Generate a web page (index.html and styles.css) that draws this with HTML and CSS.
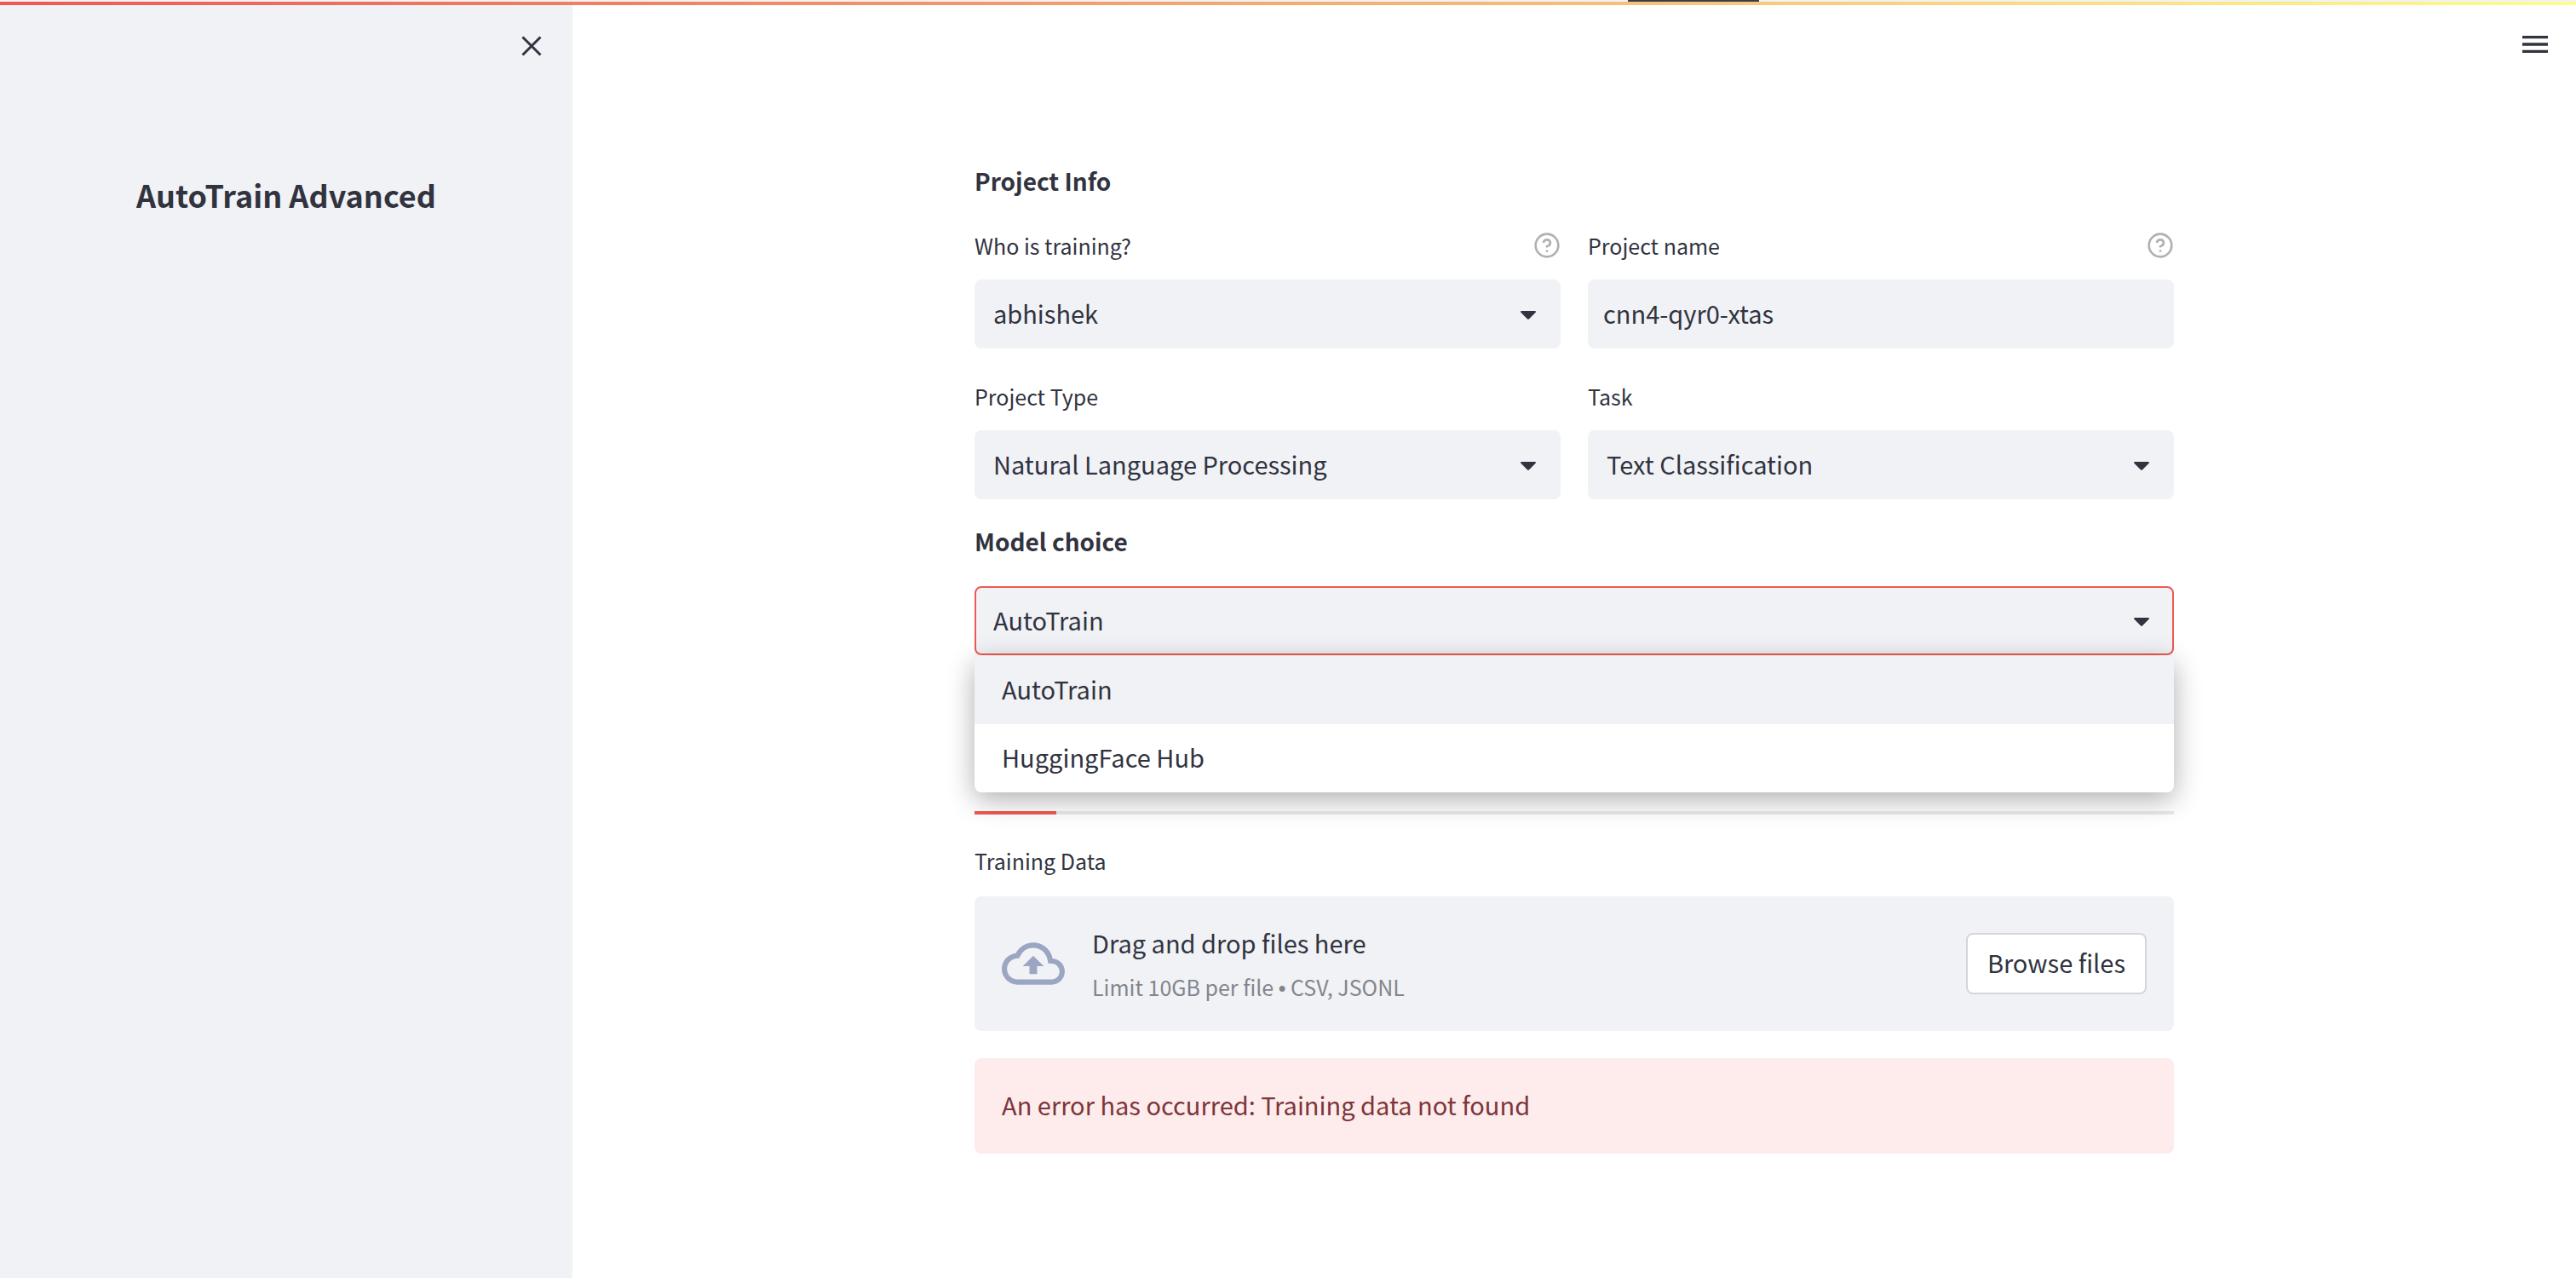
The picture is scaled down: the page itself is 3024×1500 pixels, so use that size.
FILE: index.html
```html
<!DOCTYPE html>
<html lang="en">
<head>
<meta charset="utf-8">
<meta name="viewport" content="width=device-width, initial-scale=1">
<title>AutoTrain Advanced</title>
<link rel="stylesheet" href="styles.css">
</head>
<body>
<div class="topstrip"><div class="topstrip-mark"></div></div>
<div class="decoration"></div>
<div class="app">
  <aside class="sidebar">
    <button class="icon-button sidebar-close" type="button" aria-label="Close sidebar">
      <svg width="24" height="24" viewBox="0 0 24 24" fill="none" stroke="currentColor" stroke-width="3"><path d="M1.5 1.5l21 21M22.5 1.5l-21 21"/></svg>
    </button>
    <h1 class="sidebar-title">AutoTrain Advanced</h1>
  </aside>

  <main class="main">
    <button class="icon-button menu-button" type="button" aria-label="Main menu">
      <svg width="30" height="20" viewBox="0 0 30 20" fill="currentColor"><path d="M0 0h30v3.3H0zM0 8.3h30v3.4H0zM0 16.7h30V20H0z"/></svg>
    </button>

    <form class="content">
      <h2 class="section-title">Project Info</h2>
      <div class="fields">
        <div class="field">
          <div class="label-row">
            <label for="who">Who is training?</label>
            <button class="icon-button" type="button" aria-label="Help for who is training">
              <svg width="32" height="32" viewBox="0 0 24 24" class="help" fill="none" stroke="currentColor" stroke-width="2" stroke-linecap="round" stroke-linejoin="round"><circle cx="12" cy="12" r="10"/><path d="M9.09 9a3 3 0 0 1 5.83 1c0 2-3 3-3 3M12 17h.01"/></svg>
            </button>
          </div>
          <div class="select">
            <select class="control" id="who"><option>abhishek</option></select>
            <svg class="caret" width="18" height="10" viewBox="0 0 18 10"><path d="M1.2 0h15.6c1 0 1.5 1 .8 1.700L9.900 9.400a1.300 1.300 0 0 1-1.800 0L.4 1.700C-.3 1 .2 0 1.200 0z"/></svg>
          </div>
        </div>
        <div class="field">
          <div class="label-row">
            <label for="name">Project name</label>
            <button class="icon-button" type="button" aria-label="Help for project name">
              <svg width="32" height="32" viewBox="0 0 24 24" class="help" fill="none" stroke="currentColor" stroke-width="2" stroke-linecap="round" stroke-linejoin="round"><circle cx="12" cy="12" r="10"/><path d="M9.09 9a3 3 0 0 1 5.83 1c0 2-3 3-3 3M12 17h.01"/></svg>
            </button>
          </div>
          <input class="control control-text" id="name" type="text" value="cnn4-qyr0-xtas">
        </div>
        <div class="field">
          <div class="label-row"><label for="type">Project Type</label></div>
          <div class="select">
            <select class="control" id="type"><option>Natural Language Processing</option></select>
            <svg class="caret" width="18" height="10" viewBox="0 0 18 10"><path d="M1.2 0h15.6c1 0 1.5 1 .8 1.700L9.900 9.400a1.300 1.300 0 0 1-1.800 0L.4 1.700C-.3 1 .2 0 1.200 0z"/></svg>
          </div>
        </div>
        <div class="field">
          <div class="label-row"><label for="task">Task</label></div>
          <div class="select">
            <select class="control" id="task"><option>Text Classification</option></select>
            <svg class="caret" width="18" height="10" viewBox="0 0 18 10"><path d="M1.2 0h15.6c1 0 1.5 1 .8 1.700L9.900 9.400a1.300 1.300 0 0 1-1.800 0L.4 1.700C-.3 1 .2 0 1.200 0z"/></svg>
          </div>
        </div>
      </div>

      <h2 class="section-title model-title"><label for="model">Model choice</label></h2>
      <div class="select">
        <select class="control control-active" id="model"><option>AutoTrain</option><option>HuggingFace Hub</option></select>
        <svg class="caret" width="18" height="10" viewBox="0 0 18 10"><path d="M1.2 0h15.6c1 0 1.5 1 .8 1.700L9.900 9.400a1.300 1.300 0 0 1-1.800 0L.4 1.700C-.3 1 .2 0 1.200 0z"/></svg>
        <ul class="options" role="listbox" aria-label="Model choice">
          <li class="option option-selected" role="option" aria-selected="true">AutoTrain</li>
          <li class="option" role="option" aria-selected="false">HuggingFace Hub</li>
        </ul>
      </div>

      <div class="tab-track"><div class="tab-highlight"></div></div>

      <div class="label-row upload-label"><label for="browse">Training Data</label></div>
      <div class="uploader">
        <svg class="cloud" width="74" height="74" viewBox="0 0 24 24" fill="currentColor"><path d="M19.350 10.040A7.490 7.490 0 0 0 12 4C9.110 4 6.600 5.640 5.350 8.040A5.994 5.994 0 0 0 0 14c0 3.310 2.690 6 6 6h13c2.760 0 5-2.240 5-5 0-2.640-2.050-4.780-4.650-4.960zM19 18H6c-2.210 0-4-1.790-4-4 0-2.050 1.530-3.760 3.560-3.970l1.070-.11.5-.95A5.469 5.469 0 0 1 12 6c2.620 0 4.880 1.860 5.390 4.430l.3 1.500 1.530.11A2.980 2.980 0 0 1 22 15c0 1.650-1.350 3-3 3zM8 13h2.550v3h2.900v-3H16l-4-4z"/></svg>
        <div class="upload-text">
          <span>Drag and drop files here</span>
          <small>Limit 10GB per file <span class="bullet">•</span> CSV, JSONL</small>
        </div>
        <button class="browse" id="browse" type="button">Browse files</button>
      </div>

      <div class="alert" role="alert">An error has occurred: Training data not found</div>
    </form>
  </main>
</div>
</body>
</html>
```
FILE: styles.css
```css
:root {
  --text: #31333f;
  --panel: #f0f2f6;
  --red: #ee5a54;
  --muted: #83858b;
}

* {
  box-sizing: border-box;
}

body {
  margin: 0;
  min-height: 100vh;
  display: flex;
  flex-direction: column;
  background: #fff;
  color: var(--text);
  font: 400 29px/48px "Noto Sans CJK SC", "Noto Sans", sans-serif;
}

.topstrip {
  height: 2px;
  background: var(--panel);
}

.topstrip-mark {
  width: 154px;
  height: 2px;
  margin-left: 63.200%;
  background: #3c3e4b;
}

.decoration {
  height: 4px;
  background: linear-gradient(to right, #ec5953, #fffd8c);
}

.app {
  flex: 1;
  display: flex;
}

.icon-button {
  display: flex;
  padding: 0;
  border: 0;
  background: none;
  color: inherit;
}

.sidebar {
  flex: 0 0 672px;
  padding: 36px;
  background: var(--panel);
}

.sidebar-close {
  margin-left: auto;
}

.sidebar-title {
  margin: 138px 0 0;
  font-size: 36px;
  line-height: 48px;
  font-weight: 700;
  text-align: center;
}

.main {
  flex: 1;
  position: relative;
  padding: 182px 32px 140px;
}

.menu-button {
  position: absolute;
  top: 36px;
  right: 33px;
}

.content {
  max-width: 1408px;
  margin: 0 auto;
}

.section-title {
  margin: 0 0 36px;
  font-size: 28px;
  line-height: 48px;
  font-weight: 700;
}

.model-title {
  margin: 25px 0 29px;
}

.fields {
  display: grid;
  grid-template-columns: 1fr 1fr;
  gap: 40px 32px;
}

.field {
  min-width: 0;
}

.label-row {
  display: flex;
  justify-content: space-between;
  align-items: center;
  height: 32px;
  margin-bottom: 24px;
  font-size: 25px;
  line-height: 32px;
}

.help {
  color: #b0b0b5;
}

.select {
  position: relative;
}

.control {
  display: block;
  width: 100%;
  height: 81px;
  padding: 0 64px 4px 20px;
  border: 2px solid var(--panel);
  border-radius: 8px;
  background: var(--panel);
  color: var(--text);
  font: inherit;
  appearance: none;
  outline: 0;
}

.control-text {
  padding: 0 16px 4px;
}

.control-active {
  border-color: var(--red);
}

.caret {
  position: absolute;
  top: 37px;
  right: 29px;
  fill: var(--text);
  pointer-events: none;
}

.options {
  position: absolute;
  top: 100%;
  left: 0;
  right: 0;
  margin: 1px 0 0;
  padding: 0;
  overflow: hidden;
  border-radius: 8px;
  background: #fff;
  box-shadow: 0 8px 32px rgba(0, 0, 0, 0.32);
  list-style: none;
}

.option {
  padding: 14px 32px 18px;
}

.option-selected {
  background: var(--panel);
}

.tab-track {
  height: 4px;
  margin-top: 183px;
  background: #e8e9eb;
}

.tab-highlight {
  width: 96px;
  height: 4px;
  background: var(--red);
}

.upload-label {
  margin: 38px 0 26px;
}

.uploader {
  display: flex;
  align-items: center;
  min-height: 158px;
  padding: 24px 32px;
  border-radius: 8px;
  background: var(--panel);
}

.cloud {
  flex: none;
  margin-right: 32px;
  color: #9ba7c2;
}

.upload-text {
  flex: 1;
  display: flex;
  flex-direction: column;
  gap: 4px;
  padding-top: 4px;
}

.upload-text small {
  color: var(--muted);
  font-size: 25px;
}

.bullet {
  font-family: "Liberation Sans", sans-serif;
}

.browse {
  padding: 8px 23px 12px;
  border: 2px solid #d6d6d9;
  border-radius: 8px;
  background: #fff;
  color: inherit;
  font: inherit;
}

.alert {
  margin-top: 32px;
  padding: 30px 32px 34px;
  border-radius: 8px;
  background: #fdeceb;
  color: #7d353b;
}
```
